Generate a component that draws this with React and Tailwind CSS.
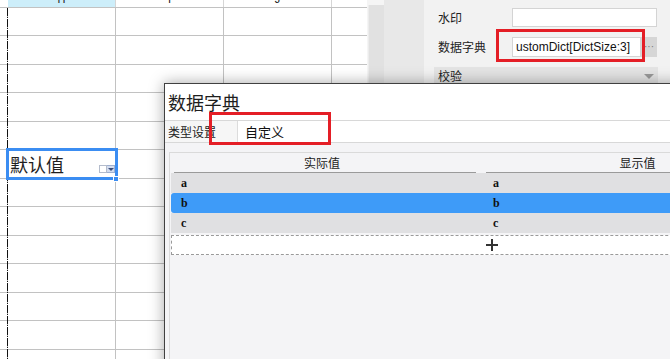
import React from 'react';

const cjk = "font-['Noto_Sans_CJK_SC','Noto_Sans',sans-serif]";
const rowCount = 13;

function ColHead({ label, active }) {
  return (
    <div
      className={`w-[108px] h-full overflow-hidden flex justify-center items-end border-r border-[#d6d6d6] ${
        active ? 'bg-[#cdeefa]' : 'bg-white'
      }`}
    >
      <span className="block mb-[2px] text-[11px] leading-[11px] text-[#222] font-['Liberation_Sans',sans-serif]">{label}</span>
    </div>
  );
}

function Sheet() {
  return (
    <div className="relative w-[367px] h-full shrink-0 bg-white overflow-hidden">
      {/* column headers */}
      <div className="flex h-[8px] border-b border-[#c2c2c2]">
        <div className="w-[8px]" />
        <ColHead label="H" active />
        <ColHead label="I" />
        <ColHead label="J" />
        <div className="flex-1" />
      </div>

      {/* cells */}
      {Array.from({ length: rowCount }).map((_, i) => (
        <div
          key={i}
          className={`flex border-b border-[#c2c2c2] ${i % 2 ? 'h-[29px]' : 'h-[28px]'}`}
        >
          <div className="w-[8px]" />
          <div className="w-[108px] border-r border-[#c2c2c2]" />
          <div className="w-[108px] border-r border-[#c2c2c2]" />
          <div className="w-[108px] border-r border-[#c2c2c2]" />
          <div className="flex-1" />
        </div>
      ))}

      {/* page break line */}
      <div className="absolute left-[7px] top-[8px] bottom-0 w-px bg-[repeating-linear-gradient(to_bottom,#111_0,#111_8px,#bbb_8px,#bbb_9px,#111_9px,#111_10px,transparent_10px,transparent_11px)]" />

      {/* selected cell */}
      <div className="absolute left-[6px] top-[148px] w-[112px] h-[32px] border-[3px] border-[#3b8df2] flex items-center">
        <span className={`pl-[1px] text-[18px] leading-none text-[#1e1e1e] ${cjk}`}>默认值</span>
        <div className="absolute left-[90px] top-[14px] flex">
          <div className="w-[8px] h-[8px] bg-white border border-[#b4bccc]" />
          <div className="w-[8px] h-[8px] bg-[#d3dcee] border border-[#9fb0d0] border-l-0 flex items-center justify-center">
            <div className="w-0 h-0 border-l-[3px] border-r-[3px] border-t-[3px] border-l-transparent border-r-transparent border-t-[#3a4d7a]" />
          </div>
        </div>
      </div>
      <div className="absolute left-[113px] top-[176px] w-[6px] h-[6px] bg-[#3b8df2] border border-white" />
    </div>
  );
}

function PropertyPanel() {
  return (
    <div className={`relative flex-1 h-full bg-[#f2f2f2] pl-[10px] pr-[12px] text-[12px] text-[#222] ${cjk}`}>
      <div className="flex items-center h-[19px] mt-[8px] pl-[4px]">
        <span className="w-[74px]">水印</span>
        <div className="w-[145px] h-[19px] bg-white border border-[#d4d4d4]" />
      </div>
      <div className="flex items-center h-[20px] mt-[10px] pl-[4px]">
        <span className="w-[74px]">数据字典</span>
        <div className="w-[129px] h-[20px] bg-white border border-[#d4d4d4] flex items-center pl-[3px] overflow-hidden">
          <span className="text-[12px] text-[#111] whitespace-nowrap font-['Liberation_Sans',sans-serif]">ustomDict[DictSize:3]</span>
        </div>
        <div className="w-[16px] h-[20px] bg-[#d6d6d6] flex items-center justify-center text-[#777] text-[10px] leading-none font-['Liberation_Sans',sans-serif]">
          ···
        </div>
      </div>
      <div className="flex items-center justify-between h-[18px] mt-[10px] bg-[#e4e4e4] pl-[4px] pr-[4px]">
        <span>校验</span>
        <div className="w-0 h-0 border-l-[5px] border-r-[5px] border-t-[5px] border-l-transparent border-r-transparent border-t-[#999]" />
      </div>

      {/* highlight */}
      <div className="absolute left-[72px] top-[29px] w-[149px] h-[33px] border-[3px] border-[#e41e26]" />
    </div>
  );
}

function DictDialog() {
  const rows = ['a', 'b', 'c'];
  return (
    <div className={`absolute left-[164px] top-[83px] w-[660px] h-[290px] border-l border-t border-[#404040] bg-[#f4f4f6] shadow-[0_0_14px_rgba(0,0,0,0.35)] flex flex-col ${cjk}`}>
      <div className="h-[37px] shrink-0 bg-white border-b border-[#d8d8d8] flex items-center pl-[3px]">
        <span className="text-[18px] leading-none text-[#1e1e1e]">数据字典</span>
      </div>
      <div className="relative h-[22px] shrink-0 bg-[#f6f6f6] border-b border-[#d8d8d8] flex items-center pl-[3px]">
        <span className="w-[69px] text-[12px] text-[#222]">类型设置</span>
        <div className="flex-1 h-[21px] bg-white border-l border-[#dcdcdc] flex items-center pl-[7px]">
          <span className="text-[13px] text-[#111]">自定义</span>
        </div>
        <div className="absolute left-[44px] top-[-9px] w-[122px] h-[33px] border-[3px] border-[#e41e26]" />
      </div>

      <div className="flex-1 ml-[4px] mt-[9px] border-l border-t border-[#dadada] flex flex-col">
        {/* header */}
        <div className="flex h-[20px] text-[12px] text-[#222]">
          <div className="w-[316px] px-[4px] flex">
            <div className="flex-1 border-b border-[#9a9a9a] flex items-center justify-center pr-[6px]">实际值</div>
            <div className="w-[6px]" />
          </div>
          <div className="w-[303px] flex border-b border-[#9a9a9a] items-center justify-center">显示值</div>
        </div>

        {/* rows */}
        <div className="flex flex-col pl-[1px] text-[12px] text-[#111] font-['Liberation_Serif',serif] font-bold">
          {rows.map((r) => (
            <div
              key={r}
              className={`flex h-[20px] items-center w-[642px] ${
                r === 'b' ? 'bg-[#3e9bf8] rounded-l-[3px]' : 'bg-[#e0e0e2]'
              }`}
            >
              <span className="w-[315px] pl-[10px]">{r}</span>
              <span className="pl-[7px]">{r}</span>
            </div>
          ))}
          <div className="mt-[2px] h-[20px] w-[642px] bg-white border border-dashed border-[#9a9a9a] flex items-center justify-center">
            <svg width="14" height="14" viewBox="0 0 14 14">
              <path d="M7 1v12M1 7h12" stroke="#333" strokeWidth="2" />
            </svg>
          </div>
        </div>
      </div>
    </div>
  );
}

export default function App() {
  return (
    <div className="relative w-[670px] h-[359px] overflow-hidden bg-white flex">
      <Sheet />
      {/* scroll gutter */}
      <div className="w-[17px] h-full shrink-0 flex flex-col bg-[#f5f5f5]">
        <div className="h-[5px]" />
        <div className="flex-1 ml-[1px] bg-[#e1e1e1] border-l border-[#ececec]" />
      </div>
      <div className="w-[40px] h-full shrink-0 bg-[#e8e8e8]" />
      <PropertyPanel />
      <DictDialog />
    </div>
  );
}
